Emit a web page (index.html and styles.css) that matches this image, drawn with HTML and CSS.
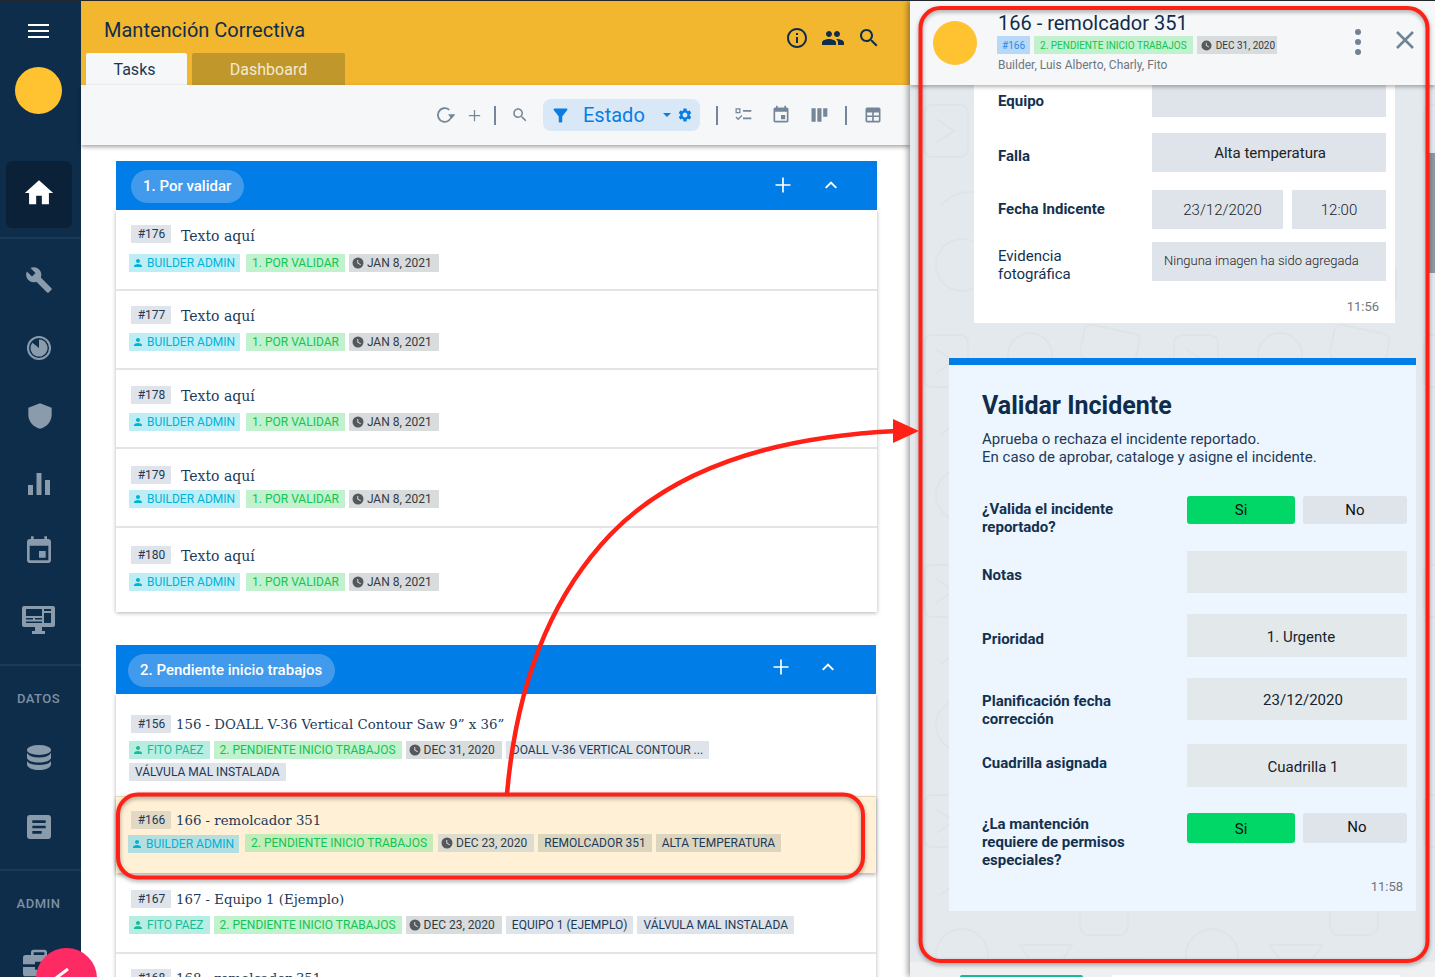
FILE: index.html
```html
<!DOCTYPE html>
<html lang="es">
<head>
<meta charset="utf-8">
<title>Mantención Correctiva</title>
<link rel="stylesheet" href="styles.css">
</head>
<body>
<svg class="sprite" aria-hidden="true">
  <symbol id="i-home" viewBox="0 0 24 24"><path d="M10 20v-6h4v6h5v-8h3L12 3 2 12h3v8z"/></symbol>
  <symbol id="i-wrench" viewBox="0 0 24 24"><path d="M22.7 19l-9.1-9.1c.9-2.3.4-5-1.5-6.9-2-2-5-2.4-7.4-1.3L9 6 6 9 1.6 4.7C.4 7.1.9 10.1 2.9 12.1c1.9 1.9 4.6 2.4 6.9 1.5l9.1 9.1c.4.4 1 .4 1.4 0l2.3-2.3c.5-.4.5-1.1.1-1.4z"/></symbol>
  <symbol id="i-gauge" viewBox="0 0 24 24"><path fill-rule="evenodd" d="M12 0a12 12 0 1 0 0 24 12 12 0 0 0 0-24zm0 2a10 10 0 1 1 0 20 10 10 0 0 1 0-20z"/><path d="M12 3.500a8.500 8.500 0 1 1-6.600 3.200L12 12z"/></symbol>
  <symbol id="i-shield" viewBox="0 0 24 24"><path d="M12 1L2 5v6c0 5.550 4.300 10.740 10 12 5.700-1.260 10-6.450 10-12V5z"/></symbol>
  <symbol id="i-bars" viewBox="0 0 24 24"><path d="M1 13h5v10H1zM9.500 1h5v22h-5zM18 8h5v15h-5z"/></symbol>
  <symbol id="i-event" viewBox="0 0 24 24"><path d="M17 12h-5v5h5v-5zM16 1v2H8V1H6v2H5c-1.110 0-1.990.9-1.990 2L3 19c0 1.100.89 2 2 2h14c1.100 0 2-.9 2-2V5c0-1.100-.9-2-2-2h-1V1h-2zm3 18H5V8h14v11z"/></symbol>
  <symbol id="i-monitor" viewBox="0 0 33 28"><path fill-rule="evenodd" d="M2 0h29a2 2 0 0 1 2 2v17a2 2 0 0 1-2 2H20v4h3v3H10v-3h3v-4H2a2 2 0 0 1-2-2V2a2 2 0 0 1 2-2zm2 3v7h16V3zm18 0v2h7V3zm0 4v10h7V7zM4 12v1.500h7V12zm9 0v1.500h7V12zM4 15.500V17h16v-1.500z"/></symbol>
  <symbol id="i-db" viewBox="0 0 24 25"><ellipse cx="12" cy="5" rx="12" ry="5"/><path d="M0 8c2 3 6 4.500 12 4.500S22 11 24 8v5c-1 3-6 4.500-12 4.500S1 16 0 13zM0 16c2 3 6 4 12 4s10-1 12-4v4c-1 3-6 5-12 5S1 23 0 20z"/></symbol>
  <symbol id="i-article" viewBox="0 0 24 24"><path d="M19 3H5c-1.100 0-2 .9-2 2v14c0 1.100.9 2 2 2h14c1.100 0 2-.9 2-2V5c0-1.100-.9-2-2-2zm-5 14H7v-2h7v2zm3-4H7v-2h10v2zm0-4H7V7h10v2z"/></symbol>
  <symbol id="i-case" viewBox="0 0 24 24"><path d="M8 2h8a2 2 0 0 1 2 2v2h4a2 2 0 0 1 2 2v5h-9v-2h-6v2H0V8a2 2 0 0 1 2-2h4V4a2 2 0 0 1 2-2zm0 2v2h8V4zM0 15h9v2h6v-2h9v5a2 2 0 0 1-2 2H2a2 2 0 0 1-2-2z"/></symbol>
  <symbol id="i-info" viewBox="0 0 24 24"><path d="M11 7h2v2h-2zm0 4h2v6h-2zm1-9C6.480 2 2 6.480 2 12s4.480 10 10 10 10-4.480 10-10S17.520 2 12 2zm0 18c-4.410 0-8-3.590-8-8s3.590-8 8-8 8 3.590 8 8-3.590 8-8 8z"/></symbol>
  <symbol id="i-people" viewBox="0 0 24 24"><path d="M16 11c1.660 0 2.990-1.340 2.990-3S17.660 5 16 5c-1.660 0-3 1.340-3 3s1.340 3 3 3zm-8 0c1.660 0 2.990-1.340 2.990-3S9.660 5 8 5C6.340 5 5 6.340 5 8s1.340 3 3 3zm0 2c-2.330 0-7 1.170-7 3.500V19h14v-2.500c0-2.330-4.670-3.500-7-3.500zm8 0c-.29 0-.62.02-.97.05 1.160.84 1.970 1.970 1.970 3.450V19h6v-2.500c0-2.330-4.670-3.500-7-3.500z"/></symbol>
  <symbol id="i-search" viewBox="0 0 24 24"><path d="M15.500 14h-.79l-.28-.27C15.410 12.590 16 11.110 16 9.500 16 5.910 13.090 3 9.500 3S3 5.910 3 9.500 5.910 16 9.500 16c1.610 0 3.090-.59 4.230-1.570l.27.28v.79l5 4.990L20.490 19l-4.990-5zm-6 0C7.010 14 5 11.990 5 9.500S7.010 5 9.500 5 14 7.010 14 9.500 11.990 14 9.500 14z"/></symbol>
  <symbol id="i-filter" viewBox="0 0 24 24"><path d="M4.250 5.610C6.270 8.200 10 13 10 13v6c0 .55.45 1 1 1h2c.55 0 1-.45 1-1v-6s3.720-4.800 5.740-7.390c.51-.66.04-1.610-.79-1.610H5.040c-.83 0-1.300.95-.79 1.610z"/></symbol>
  <symbol id="i-gear" viewBox="0 0 24 24"><path d="M19.140 12.940c.04-.3.06-.61.06-.94 0-.32-.02-.64-.07-.94l2.030-1.580a.49.49 0 0 0 .12-.61l-1.920-3.320a.488.488 0 0 0-.59-.22l-2.390.96c-.5-.38-1.030-.7-1.620-.94l-.36-2.540a.484.484 0 0 0-.48-.41h-3.840c-.24 0-.43.17-.47.41l-.36 2.540c-.59.24-1.130.57-1.620.94l-2.390-.96c-.22-.08-.47 0-.59.22L2.740 8.870c-.12.21-.08.47.12.61l2.030 1.580c-.05.3-.09.63-.09.94s.02.64.07.94l-2.030 1.580a.49.49 0 0 0-.12.61l1.920 3.320c.12.22.37.29.59.22l2.390-.96c.5.38 1.030.7 1.620.94l.36 2.540c.05.24.24.41.48.41h3.840c.24 0 .44-.17.47-.41l.36-2.540c.59-.24 1.130-.56 1.620-.94l2.390.96c.22.08.47 0 .59-.22l1.920-3.320c.12-.22.07-.47-.12-.61l-2.010-1.580zM12 15.600c-1.980 0-3.600-1.620-3.600-3.600s1.620-3.600 3.600-3.600 3.600 1.620 3.600 3.600-1.620 3.600-3.600 3.600z"/></symbol>
  <symbol id="i-person" viewBox="0 0 24 24"><path d="M12 12c2.210 0 4-1.790 4-4s-1.790-4-4-4-4 1.790-4 4 1.790 4 4 4zm0 2c-2.670 0-8 1.340-8 4v2h16v-2c0-2.660-5.330-4-8-4z"/></symbol>
  <symbol id="i-clock" viewBox="0 0 24 24"><path d="M12 1a11 11 0 1 0 0 22 11 11 0 0 0 0-22zm5 15.500l-6.500-3.800V6h2v5.600l5.500 3.200z"/></symbol>
  <symbol id="i-plus" viewBox="0 0 24 24"><path d="M11 3h2v8h8v2h-8v8h-2v-8H3v-2h8z"/></symbol>
  <symbol id="i-chev" viewBox="0 0 24 24"><path d="M12 7l-8 8 1.800 1.800L12 10.600l6.200 6.200L20 15z"/></symbol>
  <symbol id="i-refresh" viewBox="0 0 24 24"><path d="M19.900 12a8.200 8.200 0 1 1-2.800-6.200" fill="none" stroke="currentColor" stroke-width="2.200"/><path d="M15.500 11h9l-4.500 5.500z"/></symbol>
  <symbol id="i-check" viewBox="0 0 24 24"><path fill-rule="evenodd" d="M3 4h6v6H3zm1.500 1.500v3h3v-3zM12 6h10v2H12zM12 15h10v2H12zM3 15l1.200-1.200 2 2L10 12l1.200 1.200-5 5z"/></symbol>
  <symbol id="i-kanban" viewBox="0 0 24 24"><path d="M3 4h5v16H3zM10 4h5v16h-5zM17 4h5v10h-5z"/></symbol>
  <symbol id="i-table" viewBox="0 0 24 24"><path fill-rule="evenodd" d="M5 3h14a2 2 0 0 1 2 2v14a2 2 0 0 1-2 2H5a2 2 0 0 1-2-2V5a2 2 0 0 1 2-2zm0 6v3.500h6V9zm8 0v3.500h6V9zM5 14.500V19h6v-4.500zm8 0V19h6v-4.500z"/></symbol>
</svg>

<div class="app">
  <nav class="sidebar">
    <div class="burger"><span></span><span></span><span></span></div>
    <div class="side-avatar"></div>
    <div class="home-box"><svg class="home-icon"><use href="#i-home"/></svg></div>
    <div class="side-rule first-rule"></div>
    <div class="side-item"><svg class="ic-wrench"><use href="#i-wrench"/></svg></div>
    <div class="side-item"><svg class="ic-24"><use href="#i-gauge"/></svg></div>
    <div class="side-item side-shield"><svg class="ic-28"><use href="#i-shield"/></svg></div>
    <div class="side-item"><svg class="ic-24"><use href="#i-bars"/></svg></div>
    <div class="side-item side-up"><svg class="ic-32"><use href="#i-event"/></svg></div>
    <div class="side-item"><svg class="ic-monitor"><use href="#i-monitor"/></svg></div>
    <div class="side-rule rule-datos"></div>
    <div class="side-label">DATOS</div>
    <div class="side-item"><svg class="ic-db"><use href="#i-db"/></svg></div>
    <div class="side-item"><svg class="ic-32"><use href="#i-article"/></svg></div>
    <div class="side-rule rule-admin"></div>
    <div class="side-label">ADMIN</div>
    <div class="side-item"><svg class="ic-32"><use href="#i-case"/></svg></div>
  </nav>

  <main class="main">
    <header class="topbar">
      <div class="topbar-row">
        <h1 class="page-title">Mantención Correctiva</h1>
        <div class="top-icons">
          <svg class="top-icon"><use href="#i-info"/></svg>
          <svg class="top-icon"><use href="#i-people"/></svg>
          <svg class="top-icon"><use href="#i-search"/></svg>
        </div>
      </div>
      <div class="tabs">
        <div class="tab tab-active">Tasks</div>
        <div class="tab tab-muted">Dashboard</div>
      </div>
    </header>

    <div class="toolbar">
      <svg class="tool t-refresh"><use href="#i-refresh"/></svg>
      <svg class="tool t-plus"><use href="#i-plus"/></svg>
      <span class="tool-sep s-a"></span>
      <svg class="tool t-search"><use href="#i-search"/></svg>
      <div class="filter">
        <svg class="f-funnel"><use href="#i-filter"/></svg>
        <span class="f-label">Estado</span>
        <span class="f-caret"></span>
        <svg class="f-gear"><use href="#i-gear"/></svg>
      </div>
      <span class="tool-sep s-b"></span>
      <svg class="tool t-check"><use href="#i-check"/></svg>
      <svg class="tool t-cal"><use href="#i-event"/></svg>
      <svg class="tool t-kan"><use href="#i-kanban"/></svg>
      <span class="tool-sep s-c"></span>
      <svg class="tool t-table"><use href="#i-table"/></svg>
    </div>

    <div class="board">
      <section class="group group-a">
        <div class="group-head">
          <span class="group-pill">1. Por validar</span>
          <svg class="gh-plus"><use href="#i-plus"/></svg>
          <svg class="gh-chev"><use href="#i-chev"/></svg>
        </div>
        <div class="rows">
          <article class="row">
            <div class="row-head"><span class="chip">#176</span><span class="row-title">Texto aquí</span></div>
            <div class="tags"><span class="tag tag-person"><svg class="tag-ic"><use href="#i-person"/></svg>BUILDER ADMIN</span><span class="tag tag-green">1. POR VALIDAR</span><span class="tag tag-date"><svg class="tag-ic"><use href="#i-clock"/></svg>JAN 8, 2021</span></div>
          </article>
          <article class="row">
            <div class="row-head"><span class="chip">#177</span><span class="row-title">Texto aquí</span></div>
            <div class="tags"><span class="tag tag-person"><svg class="tag-ic"><use href="#i-person"/></svg>BUILDER ADMIN</span><span class="tag tag-green">1. POR VALIDAR</span><span class="tag tag-date"><svg class="tag-ic"><use href="#i-clock"/></svg>JAN 8, 2021</span></div>
          </article>
          <article class="row">
            <div class="row-head"><span class="chip">#178</span><span class="row-title">Texto aquí</span></div>
            <div class="tags"><span class="tag tag-person"><svg class="tag-ic"><use href="#i-person"/></svg>BUILDER ADMIN</span><span class="tag tag-green">1. POR VALIDAR</span><span class="tag tag-date"><svg class="tag-ic"><use href="#i-clock"/></svg>JAN 8, 2021</span></div>
          </article>
          <article class="row">
            <div class="row-head"><span class="chip">#179</span><span class="row-title">Texto aquí</span></div>
            <div class="tags"><span class="tag tag-person"><svg class="tag-ic"><use href="#i-person"/></svg>BUILDER ADMIN</span><span class="tag tag-green">1. POR VALIDAR</span><span class="tag tag-date"><svg class="tag-ic"><use href="#i-clock"/></svg>JAN 8, 2021</span></div>
          </article>
          <article class="row">
            <div class="row-head"><span class="chip">#180</span><span class="row-title">Texto aquí</span></div>
            <div class="tags"><span class="tag tag-person"><svg class="tag-ic"><use href="#i-person"/></svg>BUILDER ADMIN</span><span class="tag tag-green">1. POR VALIDAR</span><span class="tag tag-date"><svg class="tag-ic"><use href="#i-clock"/></svg>JAN 8, 2021</span></div>
          </article>
        </div>
      </section>

      <section class="group group-b">
        <div class="group-head">
          <span class="group-pill">2. Pendiente inicio trabajos</span>
          <svg class="gh-plus"><use href="#i-plus"/></svg>
          <svg class="gh-chev"><use href="#i-chev"/></svg>
        </div>
        <div class="rows">
          <article class="row">
            <div class="row-head"><span class="chip">#156</span><span class="row-title">156 - DOALL V-36 Vertical Contour Saw 9” x 36”</span></div>
            <div class="tags"><span class="tag tag-fito"><svg class="tag-ic"><use href="#i-person"/></svg>FITO PAEZ</span><span class="tag tag-green">2. PENDIENTE INICIO TRABAJOS</span><span class="tag tag-date"><svg class="tag-ic"><use href="#i-clock"/></svg>DEC 31, 2020</span><span class="tag tag-gray">DOALL V-36 VERTICAL CONTOUR ...</span><span class="tag tag-gray">VÁLVULA MAL INSTALADA</span></div>
          </article>
          <article class="row row-current">
            <div class="row-head"><span class="chip">#166</span><span class="row-title">166 - remolcador 351</span></div>
            <div class="tags"><span class="tag tag-person"><svg class="tag-ic"><use href="#i-person"/></svg>BUILDER ADMIN</span><span class="tag tag-green">2. PENDIENTE INICIO TRABAJOS</span><span class="tag tag-date"><svg class="tag-ic"><use href="#i-clock"/></svg>DEC 23, 2020</span><span class="tag tag-gray">REMOLCADOR 351</span><span class="tag tag-gray">ALTA TEMPERATURA</span></div>
          </article>
          <article class="row">
            <div class="row-head"><span class="chip">#167</span><span class="row-title">167 - Equipo 1 (Ejemplo)</span></div>
            <div class="tags"><span class="tag tag-fito"><svg class="tag-ic"><use href="#i-person"/></svg>FITO PAEZ</span><span class="tag tag-green">2. PENDIENTE INICIO TRABAJOS</span><span class="tag tag-date"><svg class="tag-ic"><use href="#i-clock"/></svg>DEC 23, 2020</span><span class="tag tag-gray">EQUIPO 1 (EJEMPLO)</span><span class="tag tag-gray">VÁLVULA MAL INSTALADA</span></div>
          </article>
          <article class="row">
            <div class="row-head"><span class="chip">#168</span><span class="row-title">168 - remolcador 351</span></div>
          </article>
        </div>
      </section>
    </div>
  </main>

  <aside class="panel">
    <header class="panel-head">
      <div class="panel-avatar"></div>
      <div class="panel-info">
        <h2 class="panel-title">166 - remolcador 351</h2>
        <div class="panel-tags"><span class="ptag ptag-blue">#166</span><span class="ptag ptag-green">2. PENDIENTE INICIO TRABAJOS</span><span class="ptag ptag-date"><svg class="ptag-ic"><use href="#i-clock"/></svg>DEC 31, 2020</span></div>
        <div class="panel-people">Builder, Luis Alberto, Charly, Fito</div>
      </div>
      <div class="panel-dots"><span></span><span></span><span></span></div>
      <svg class="panel-close" viewBox="0 0 18 18"><path d="M1 1l16 16M17 1L1 17"/></svg>
    </header>

    <div class="chat">
      <svg class="chat-doodle" aria-hidden="true">
        <defs>
          <pattern id="doodle" width="250" height="230" patternUnits="userSpaceOnUse">
            <rect x="14" y="20" width="44" height="52" rx="8"/>
            <path d="M26 34l18 12-18 12"/>
            <circle cx="120" cy="40" r="22"/>
            <rect x="172" y="14" width="56" height="34" rx="6" transform="rotate(12 200 30)"/>
            <path d="M30 120q30-26 58 0t58 0"/>
            <rect x="170" y="100" width="48" height="60" rx="9"/>
            <circle cx="52" cy="180" r="26"/>
            <path d="M110 170l26 40 26-40zM196 184h40v30h-40z"/>
          </pattern>
        </defs>
        <rect class="doodle-fill" width="100%" height="100%"/>
      </svg>

      <div class="bubble">
        <div class="b-row b-equipo"><div class="b-label">Equipo</div><div class="b-field b-empty"></div></div>
        <div class="b-row b-falla"><div class="b-label">Falla</div><div class="b-field">Alta temperatura</div></div>
        <div class="b-row b-fecha"><div class="b-label">Fecha Indicente</div><div class="b-field b-date">23/12/2020</div><div class="b-field b-time">12:00</div></div>
        <div class="b-row b-evid"><div class="b-label b-plain">Evidencia<br>fotográfica</div><div class="b-field b-note">Ninguna imagen ha sido agregada</div></div>
        <div class="b-stamp">11:56</div>
      </div>

      <div class="vcard">
        <h3 class="v-title">Validar Incidente</h3>
        <p class="v-desc">Aprueba o rechaza el incidente reportado.<br>En caso de aprobar, cataloge y asigne el incidente.</p>
        <div class="v-row v-r1"><div class="v-label">¿Valida el incidente<br>reportado?</div><div class="v-btn v-yes">Si</div><div class="v-btn v-no">No</div></div>
        <div class="v-row v-r2"><div class="v-label">Notas</div><div class="v-field"></div></div>
        <div class="v-row v-r3"><div class="v-label">Prioridad</div><div class="v-field">1. Urgente</div></div>
        <div class="v-row v-r4"><div class="v-label">Planificación fecha<br>corrección</div><div class="v-field">23/12/2020</div></div>
        <div class="v-row v-r5"><div class="v-label">Cuadrilla asignada</div><div class="v-field">Cuadrilla 1</div></div>
        <div class="v-row v-r6"><div class="v-label">¿La mantención<br>requiere de permisos<br>especiales?</div><div class="v-btn v-yes">Si</div><div class="v-btn v-no">No</div></div>
        <div class="v-stamp">11:58</div>
      </div>
    </div>

    <div class="panel-foot"><span class="foot-teal"></span><span class="foot-white"></span></div>
  </aside>
</div>

<div class="fab"><svg class="fab-pen" viewBox="0 0 16 12"><path d="M2 11L14 2"/></svg></div>

<svg class="marks" viewBox="0 0 1435 977" aria-hidden="true">
  <rect class="mark-box" x="118" y="794.500" width="745" height="83" rx="20"/>
  <rect class="mark-box" x="920.500" y="8" width="507" height="953" rx="20"/>
  <path class="mark-line" d="M507 794C516 690 548 600 610 535C680 462 790 436 897 431"/>
  <polygon class="mark-head" points="893,419 919,431 893,443"/>
</svg>
</body>
</html>
```

FILE: styles.css
```css
* { box-sizing: border-box; }
html, body { margin: 0; height: 977px; overflow: hidden; }
body {
  position: relative;
  border-top: 1px solid #23262b;
  font-family: Roboto, "Liberation Sans", sans-serif;
  color: #0f2d4a;
  background: #fff;
}
.sprite { display: none; }
.app { display: flex; height: 976px; }
svg { display: block; fill: currentColor; }

/* Sidebar */
.sidebar { flex: 0 0 81px; background: #0e2d4b; color: #8a9bac; display: flex; flex-direction: column; align-items: center; padding-right: 4px; overflow: hidden; }
.burger { height: 60px; display: flex; flex-direction: column; justify-content: center; gap: 4px; flex: none; }
.burger span { display: block; width: 21px; height: 2px; background: #fff; }
.side-avatar { flex: none; width: 47px; height: 47px; margin-top: 6px; border-radius: 50%; background: #ffc231; }
.home-box { flex: none; align-self: flex-start; width: 66px; height: 67px; margin: 47px 0 0 6px; border-radius: 6px; background: #0a2138; display: flex; align-items: center; justify-content: center; color: #fff; }
.home-icon { width: 34px; height: 34px; margin-top: -4px; }
.side-rule { flex: none; align-self: flex-start; width: 81px; height: 2px; background: #1a3a57; }
.first-rule { margin-top: 9px; }
.rule-datos { margin-top: 10px; }
.rule-admin { margin-top: 8px; }
.side-item { flex: none; width: 100%; height: 68px; display: flex; align-items: center; justify-content: center; }
.first-rule + .side-item { margin-top: 7px; }
.side-up svg { margin-top: -2px; }
.side-shield svg { margin-left: 2px; }
.ic-wrench { width: 28px; height: 28px; }
.ic-24 { width: 24px; height: 24px; }
.ic-28 { width: 28px; height: 28px; }
.ic-32 { width: 32px; height: 32px; }
.ic-monitor { width: 33px; height: 28px; }
.ic-db { width: 24px; height: 25px; }
.side-label { flex: none; height: 46px; padding-top: 24px; font-size: 13px; line-height: 18px; font-weight: 500; letter-spacing: .5px; color: #7e90a3; }
.side-label + .side-item { margin-top: 11px; height: 69px; }
.side-label + .side-item + .side-item { height: 69px; }

/* Main */
.main { flex: 0 0 829px; display: flex; flex-direction: column; min-width: 0; }
.topbar { flex: none; height: 84px; background: #f3b72f; display: flex; flex-direction: column; }
.topbar-row { height: 52px; display: flex; justify-content: space-between; padding: 17px 29px 0 23px; }
.page-title { margin: 0; font-size: 20px; line-height: 25px; font-weight: 400; color: #0f2d4a; }
.top-icons { display: flex; gap: 12px; margin-top: 8px; }
.top-icon { width: 24px; height: 24px; color: #0f2d4a; }
.tabs { display: flex; gap: 5px; padding-left: 5px; }
.tab { height: 32px; border-radius: 2px 2px 0 0; font-size: 16px; line-height: 33px; text-align: center; }
.tab-active { width: 101px; padding-right: 4px; background: #f6f7f9; color: #1b3853; }
.tab-muted { width: 153px; background: #bf972b; color: #f3ead3; }

.toolbar { flex: none; height: 60px; position: relative; z-index: 2; background: #f6f7f9; box-shadow: 0 2px 4px rgba(0,0,0,.35); display: flex; align-items: center; padding-left: 354px; color: #74879a; }
.tool { flex: none; width: 20px; height: 20px; }
.t-plus { margin-left: 12px; width: 15px; height: 15px; }
.tool-sep { flex: none; width: 2px; height: 19px; background: #74879a; }
.s-a { margin-left: 12px; }
.t-search { margin-left: 15px; width: 18px; height: 18px; }
.filter { flex: none; width: 157px; height: 32px; margin-left: 14px; border-radius: 8px; background: #d9e8f7; color: #0a7de3; display: flex; align-items: center; padding-left: 7px; }
.f-funnel { width: 21px; height: 21px; flex: none; }
.f-label { flex: none; margin-left: 12px; font-size: 20px; line-height: 32px; font-weight: 400; width: 80px; }
.f-caret { width: 0; height: 0; border-left: 4px solid transparent; border-right: 4px solid transparent; border-top: 4px solid #0a7de3; }
.f-gear { width: 16px; height: 16px; margin-left: 6px; flex: none; }
.s-b { margin-left: 16px; }
.t-check { margin-left: 15px; }
.t-cal { margin-left: 18px; }
.t-kan { margin-left: 18px; }
.s-c { margin-left: 16px; }
.t-table { margin-left: 16px; }

.board { flex: 1; min-height: 0; overflow: hidden; padding: 16px 33px 0 35px; }
.group-a { width: 761px; }
.group-b { width: 760px; margin-top: 33px; }
.group-head { height: 49px; background: #007de6; display: flex; align-items: center; color: #fff; position: relative; }
.group-pill { height: 33px; border-radius: 17px; background: #419aec; color: #fff; font-size: 15px; line-height: 33px; font-weight: 500; margin-left: 15px; margin-top: 1px; padding: 0 13px 0 12px; }
.group-b .group-pill { margin-left: 12px; margin-top: 1px; }
.gh-plus { width: 20px; height: 20px; margin-left: auto; margin-top: -1px; }
.gh-chev { width: 18px; height: 18px; margin-left: 29px; margin-right: 37px; margin-top: -1px; }
.group-b .gh-plus { margin-top: -5px; }
.group-b .gh-chev { margin-left: 28px; margin-right: 39px; margin-top: -5px; }
.rows { background: #fff; box-shadow: 0 1px 4px rgba(0,0,0,.3); }
.row { --pt: 15px; --gap: 9px; height: 79px; padding: var(--pt) 20px 0 13px; border-bottom: 2px solid #e2e4e7; position: relative; }
.group-a .row:nth-child(1) { --gap: 11px; height: 81px; }
.group-a .row:nth-child(3) { --pt: 16px; }
.group-a .row:nth-child(4) { --pt: 17px; --gap: 6px; }
.group-a .row:nth-child(5) { --pt: 18px; height: 84px; border-bottom: 0; }
.group-b .row { --gap: 8px; }
.group-b .row:nth-child(1) { --pt: 21px; height: 102px; border-bottom: 0; }
.group-b .row.row-current { --pt: 14px; --gap: 5px; height: 77px; background: #fff0d6; border-bottom: 0; box-shadow: 0 2px 4px rgba(0,0,0,.3); border-top: 1px solid #e5d8ba; z-index: 1; }
.group-b .row:nth-child(3) { --pt: 17px; height: 81px; }
.group-b .row:nth-child(4) { height: 40px; border-bottom: 0; }

.row-head { display: flex; align-items: center; height: 18px; padding-left: 2px; }
.chip { flex: none; width: 40px; height: 18px; background: #dfe3ea; color: #1c3a57; font-size: 12px; line-height: 18px; text-align: center; padding-left: 1px; }
.row-current .chip { background: #dfd9c6; }
.row-title { margin-left: 10px; padding-top: 2px; font-family: "DejaVu Serif", "Liberation Serif", serif; font-size: 14px; line-height: 18px; color: #1c3a57; white-space: nowrap; }
.group-a .row:first-child .row-title { padding-top: 3px; }
.group-b .row-title { margin-left: 5px; padding-top: 1px; font-size: 13.300px; }
.group-b .row:first-child .row-title { padding-top: 2px; }
.tags { display: flex; flex-wrap: wrap; gap: 4px 5px; margin-top: var(--gap); }
.group-b .tags { gap: 4px; }
.tag { display: inline-flex; align-items: center; height: 18px; padding: 0 6px; font-size: 12px; line-height: 18px; white-space: nowrap; }
.tag-ic { flex: none; width: 12px; height: 12px; margin-right: 3px; }
.tag-person { background: #bdeef6; color: #00b2d6; padding: 0 5px 0 3px; margin-right: 1px; }
.tag-fito { background: #b8eee1; color: #14bd9a; padding-left: 3px; }
.tag-green { background: #c1f2cd; color: #12c455; margin-right: -1px; }
.group-b .tag-green { margin-right: 0; }
.tag-date { background: #d9dcdc; color: #333b42; padding: 0 7px 0 3px; }
.tag-date .tag-ic { color: #55595d; }
.tag-gray { background: #dfe3ea; color: #1c3a57; }
.row-current .tag-person { background: #b4dfe0; margin-left: -1px; margin-top: 1px; margin-right: 2px; }
.group-b .row-current .tag-green { background: #c4ecb9; margin-right: 1px; }
.row-current .tag-date { background: #dddcd0; }
.row-current .tag-gray { background: #ddd6bf; }

/* Panel */
.panel { flex: 0 0 525px; position: relative; z-index: 3; background: #eef0f2; box-shadow: -2px 0 6px rgba(0,0,0,.4); display: flex; flex-direction: column; overflow: hidden; }
.panel-head { flex: none; height: 84px; position: relative; z-index: 2; background: #f6f7f9; box-shadow: 0 2px 4px rgba(0,0,0,.3); display: flex; padding-left: 23px; }
.panel-avatar { flex: none; width: 44px; height: 44px; margin-top: 20px; border-radius: 50%; background: #ffc231; }
.panel-info { flex: none; width: 335px; margin-left: 21px; padding-top: 10px; }
.panel-title { margin: 0; font-size: 20px; line-height: 24px; font-weight: 400; color: #0f2d4a; white-space: nowrap; }
.panel-tags { display: flex; gap: 4px; margin-top: 1px; margin-left: -1px; }
.ptag { display: inline-flex; align-items: center; height: 18px; padding: 0 6px; font-size: 10px; white-space: nowrap; }
.ptag-ic { width: 11px; height: 11px; margin-right: 4px; color: #55595d; }
.ptag-blue { background: #b7d9f7; color: #2b8be6; padding: 0 5px; }
.ptag-green { background: #c1f2cd; color: #12c455; }
.ptag-date { background: #d9dcdc; color: #333b42; padding: 0 2px 0 4px; }
.panel-people { margin-top: 2px; font-size: 12px; line-height: 18px; color: #6d7680; white-space: nowrap; }
.panel-dots { flex: none; display: flex; flex-direction: column; gap: 4px; margin: 28px 0 0 22px; }
.panel-dots span { width: 6px; height: 6px; border-radius: 50%; background: #6f8296; }
.panel-close { flex: none; width: 18px; height: 18px; margin: 30px 0 0 35px; fill: none; stroke: #6f8296; stroke-width: 2.500; }

.chat { flex: none; height: 877px; position: relative; background: #e4e9ed; padding-left: 39px; overflow: hidden; }
.chat-doodle { position: absolute; inset: 0; width: 100%; height: 100%; }
.chat-doodle pattern * { fill: none; stroke: #dfe4e8; stroke-width: 2; }
.doodle-fill { fill: url(#doodle); }
.bubble { position: relative; width: 421px; height: 238px; padding-left: 24px; margin-left: 25px; background: #fff; }
.b-row { display: flex; position: relative; }
.b-label { flex: none; width: 154px; font-size: 15px; line-height: 18px; font-weight: 700; color: #13314e; }
.b-plain { font-weight: 400; }
.b-field { width: 234px; height: 39px; background: #dfe3ea; font-size: 15px; font-weight: 300; line-height: 41px; text-align: center; color: #222; }
.b-equipo { height: 32px; }
.b-equipo .b-label { padding-top: 7px; }
.b-empty { height: 32px; }
.b-falla { margin-top: 16px; }
.b-falla .b-label { padding-top: 14px; }
.b-falla .b-field { font-weight: 400; padding-left: 2px; }
.b-fecha { margin-top: 18px; }
.b-fecha .b-label { padding-top: 10px; }
.b-date { width: 131px; margin-right: 9px; padding-left: 10px; }
.b-time { width: 94px; }
.b-evid { margin-top: 13px; }
.b-evid .b-label { padding-top: 5px; }
.b-note { font-size: 13px; text-align: left; padding-left: 12px; line-height: 37px; }
.b-stamp { position: absolute; right: 16px; top: 214px; font-size: 13px; line-height: 16px; color: #6d7680; }

.vcard { position: relative; width: 467px; height: 553px; margin-top: 35px; border-top: 7px solid #007de6; background: #edf5ff; padding: 0 9px 0 33px; }
.v-title { margin: 0; padding-top: 26px; font-size: 25px; line-height: 30px; font-weight: 700; color: #0f2d4a; }
.v-desc { margin: 9px 0 0; font-size: 15px; line-height: 18px; color: #1c3a57; white-space: nowrap; }
.v-row { display: flex; align-items: flex-start; }
.v-label { flex: none; width: 205px; font-size: 15px; line-height: 18px; font-weight: 700; color: #13314e; }
.v-btn { height: 28px; border-radius: 3px; font-size: 15px; line-height: 28px; text-align: center; color: #111; }
.v-yes { width: 108px; background: #00d766; }
.v-no { width: 104px; margin-left: 8px; background: #dfe3ea; }
.v-field { width: 220px; height: 43px; background: #e3e8ea; font-size: 15px; line-height: 43px; text-align: center; color: #16222c; padding-left: 12px; }
.v-r1 { margin-top: 30px; }
.v-r1 .v-label { padding-top: 4px; }
.v-r2 { margin-top: 15px; }
.v-r2 .v-label { padding-top: 15px; }
.v-r2 .v-field { height: 42px; }
.v-r3 { margin-top: 21px; }
.v-r3 .v-label { padding-top: 16px; }
.v-r3 .v-field { line-height: 46px; padding-left: 8px; }
.v-r4 { margin-top: 21px; }
.v-r4 .v-label { padding-top: 14px; }
.v-r4 .v-field { height: 42px; line-height: 44px; }
.v-r5 { margin-top: 16px; }
.v-r5 .v-label { padding-top: 10px; }
.v-r5 .v-field { line-height: 46px; }
.v-r6 { margin-top: 26px; }
.v-r6 .v-btn { height: 30px; line-height: 32px; }
.v-r6 .v-no { line-height: 29px; padding-left: 4px; }
.v-r6 .v-label { padding-top: 2px; }
.v-stamp { position: absolute; right: 13px; top: 514px; font-size: 13px; line-height: 16px; color: #6d7680; }

.panel-foot { flex: none; display: flex; padding: 13px 0 0 50px; gap: 29px; }
.foot-teal { width: 123px; height: 2px; border-radius: 6px 6px 0 0; background: #17b99a; }
.foot-white { width: 288px; height: 2px; background: #fff; }

/* Floating */
.fab { position: absolute; left: 36px; top: 947px; width: 61px; height: 61px; border-radius: 50%; background: #fe2a63; z-index: 5; }
.fab-pen { position: absolute; left: 18px; top: 19px; width: 16px; height: 12px; fill: none; stroke: #fff; stroke-width: 3; }
.marks { position: absolute; left: 0; top: -1px; width: 1435px; height: 977px; z-index: 6; pointer-events: none; fill: none; }
.mark-box { fill: none; stroke: #ff2016; stroke-width: 4; filter: drop-shadow(0 2px 2px rgba(0,0,0,.35)); }
.mark-line { fill: none; stroke: #ff2016; stroke-width: 4.500; }
.mark-head { fill: #ff2016; }
.panel::after { content: ""; position: absolute; right: 0; top: 152px; width: 6px; height: 120px; background: #8d98a2; z-index: 4; }
```
